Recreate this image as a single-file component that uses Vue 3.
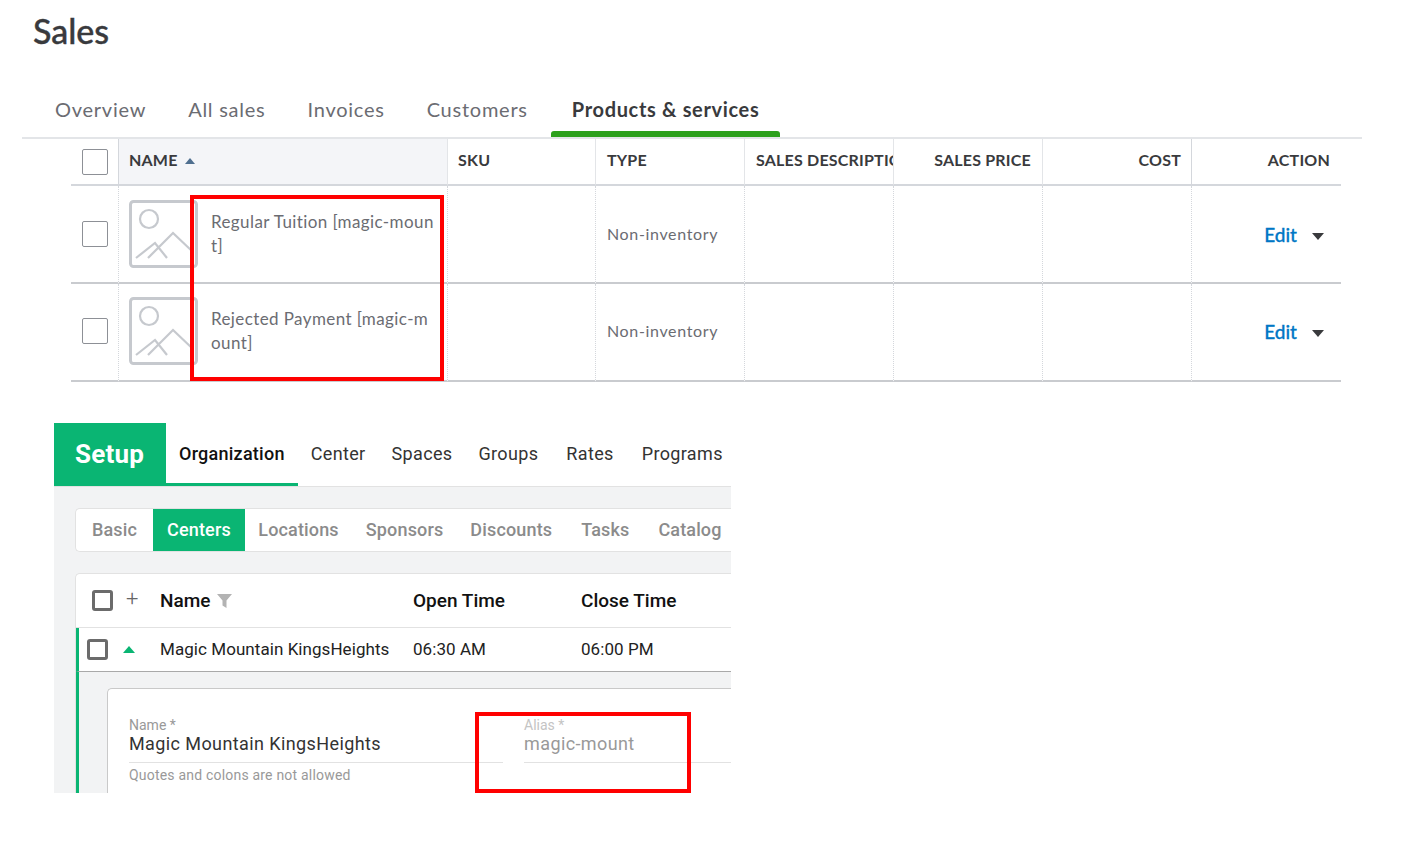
<template>
  <div class="page">
    <h1 class="title">Sales</h1>
    <nav class="tabs">
      <a v-for="tab in tabs" :key="tab" class="tab" :class="{ active: tab === 'Products & services' }">{{ tab }}</a>
    </nav>

    <div class="table-wrap">
      <table class="products">
        <colgroup>
          <col v-for="(w, i) in colWidths" :key="i" :style="{ width: w + 'px' }" />
        </colgroup>
        <thead>
          <tr>
            <th class="check-col"><span class="qb-check"></span></th>
            <th class="name-head">NAME <span class="sort-up"></span></th>
            <th>SKU</th>
            <th>TYPE</th>
            <th>SALES DESCRIPTION</th>
            <th class="right">SALES PRICE</th>
            <th class="right cost-head">COST</th>
            <th class="right">ACTION</th>
          </tr>
        </thead>
        <tbody>
          <tr v-for="item in products" :key="item.name">
            <td class="check-col"><span class="qb-check"></span></td>
            <td>
              <div class="name-cell">
                <svg class="thumb" viewBox="0 0 69 68" fill="none" stroke="#c6c9ce" stroke-width="2.2">
                  <rect x="1.5" y="1.5" width="66" height="65" rx="3" stroke-width="3" />
                  <circle cx="20" cy="19" r="9" />
                  <path d="M7 58 26 43 38 58M19 58 44 33 64 52" />
                </svg>
                <span class="item-name">{{ item.name }}</span>
              </div>
            </td>
            <td></td>
            <td class="type">Non-inventory</td>
            <td></td>
            <td></td>
            <td></td>
            <td class="action">
              <a class="edit">Edit</a><span class="caret-down"></span>
            </td>
          </tr>
        </tbody>
      </table>
      <div class="callout first"></div>
    </div>

    <section class="setup">
      <header class="setup-nav">
        <div class="setup-title">Setup</div>
        <a v-for="item in setupNav" :key="item" class="setup-link" :class="{ active: item === 'Organization' }">{{ item }}</a>
      </header>
      <div class="setup-body">
        <div class="subtabs">
          <a v-for="item in subTabs" :key="item" class="subtab" :class="{ active: item === 'Centers' }">{{ item }}</a>
        </div>
        <div class="centers">
          <div class="row head-row">
            <span class="box"></span>
            <span class="plus">+</span>
            <span class="cell-name">Name
              <svg class="funnel" viewBox="0 0 15 15"><path d="M0 1h15L9.500 7.500V15L5.500 12.500V7.500z" fill="#b3b3b3" /></svg>
            </span>
            <span class="cell-open">Open Time</span>
            <span>Close Time</span>
          </div>
          <div class="row data-row">
            <span class="box"></span>
            <span class="caret-up"></span>
            <span class="cell-name">Magic Mountain KingsHeights</span>
            <span class="cell-open">06:30 AM</span>
            <span>06:00 PM</span>
          </div>
          <div class="detail">
            <div class="detail-card">
              <div class="field name-field">
                <label>Name *</label>
                <div class="value">Magic Mountain KingsHeights</div>
                <small>Quotes and colons are not allowed</small>
              </div>
              <div class="field alias-field">
                <label>Alias *</label>
                <div class="value">magic-mount</div>
              </div>
            </div>
          </div>
        </div>
      </div>
      <div class="callout second"></div>
    </section>
  </div>
</template>

<script setup>
const tabs = ['Overview', 'All sales', 'Invoices', 'Customers', 'Products & services']
const colWidths = [48, 329, 148, 149, 149, 149, 149, 149]
const products = [
  { name: 'Regular Tuition [magic-mount]' },
  { name: 'Rejected Payment [magic-mount]' }
]
const setupNav = ['Organization', 'Center', 'Spaces', 'Groups', 'Rates', 'Programs']
const subTabs = ['Basic', 'Centers', 'Locations', 'Sponsors', 'Discounts', 'Tasks', 'Catalog']
</script>

<style>
html,
body {
  margin: 0;
  background: #fff;
}
</style>

<style scoped>
.page {
  position: relative;
  width: 1405px;
  height: 845px;
  overflow: hidden;
  font-family: Lato, "Open Sans", sans-serif;
  color: #393a3d;
}

.title {
  margin: 0 0 0 33px;
  height: 88px;
  padding-top: 11px;
  box-sizing: border-box;
  font-size: 34px;
  line-height: 40px;
  font-weight: 500;
  -webkit-text-stroke: 0.4px #393a3d;
}

.tabs {
  display: flex;
  width: 1328px;
  margin-left: 22px;
  padding-left: 12px;
  border-bottom: 2px solid #e3e5e8;
}

.tab {
  position: relative;
  box-sizing: border-box;
  height: 49px;
  padding: 0 21px;
  font-size: 20px;
  line-height: 42px;
  letter-spacing: 0.75px;
  color: #6b6c72;
  white-space: nowrap;
}

.tab.active {
  margin-left: 2px;
  font-weight: 700;
  letter-spacing: 0.66px;
  color: #393a3d;
}

.tab.active::after {
  content: "";
  position: absolute;
  left: 0;
  right: 0;
  bottom: 0;
  height: 6px;
  border-radius: 3px 3px 0 0;
  background: #2ca01c;
}

.table-wrap {
  position: relative;
  margin-left: 71px;
  width: 1270px;
}

.products {
  width: 1270px;
  table-layout: fixed;
  border-collapse: separate;
  border-spacing: 0;
}

.products th {
  box-sizing: border-box;
  height: 47px;
  padding: 0 0 4px 11px;
  border-bottom: 2px solid #d4d7dc;
  border-right: 1px solid #e3e5e8;
  font-size: 16px;
  letter-spacing: 0.2px;
  font-weight: 700;
  text-align: left;
  white-space: nowrap;
  overflow: hidden;
}

.products th:last-child {
  border-right: 0;
}

.products th:nth-child(2),
.products th:nth-child(3) {
  padding-left: 10px;
}

.products th.right {
  padding: 0 11px 4px 0;
  text-align: right;
}

.products th.cost-head {
  padding-right: 10px;
  border-right-color: #d4d7dc;
}

.products th.check-col {
  padding: 0 0 0 11px;
  border-right-color: #d4d7dc;
}

.products .name-head {
  background: #f4f5f8;
}

.sort-up {
  display: inline-block;
  margin-left: 3px;
  vertical-align: 2px;
  border: 5px solid transparent;
  border-top: 0;
  border-bottom: 6px solid #4f6f8f;
}

.products td {
  box-sizing: border-box;
  height: 98px;
  padding: 0;
  border-bottom: 2px solid #c9cbcf;
  border-right: 1px dotted #d4d7dc;
  vertical-align: middle;
}

.products td:last-child {
  border-right: 0;
}

.products td.check-col {
  padding-left: 11px;
}

.products tbody tr:last-child td {
  padding-bottom: 2px;
}

.qb-check {
  display: block;
  box-sizing: border-box;
  width: 26px;
  height: 26px;
  border: 1px solid #8d9096;
  border-radius: 2px;
  background: #fff;
}

.name-cell {
  display: flex;
  align-items: flex-start;
  padding-left: 10px;
  height: 68px;
}

.thumb {
  flex: none;
  width: 69px;
  height: 68px;
}

.item-name {
  width: 225px;
  margin: 10px 0 0 13px;
  font-size: 17px;
  line-height: 24px;
  letter-spacing: 0.4px;
  color: #6b6c72;
  word-break: break-all;
}

.products td.type {
  padding: 0 0 2px 11px;
  font-size: 16px;
  letter-spacing: 0.65px;
  color: #6b6c72;
}

.products tbody tr:last-child td.type {
  padding-bottom: 4px;
}

.products td.action {
  padding: 0 17px 0 0;
  text-align: right;
  white-space: nowrap;
}

.edit {
  font-size: 19px;
  font-weight: 500;
  color: #0077c5;
  -webkit-text-stroke: 0.3px #0077c5;
}

.caret-down {
  display: inline-block;
  margin-left: 15px;
  vertical-align: 2px;
  border: 6px solid transparent;
  border-bottom: 0;
  border-top: 7px solid #393a3d;
}

.callout {
  position: absolute;
  box-sizing: border-box;
  border: 4px solid #ff0000;
  pointer-events: none;
}

.callout.first {
  left: 119px;
  top: 56px;
  width: 254px;
  height: 186px;
}

.setup {
  position: relative;
  margin: 41px 0 0 54px;
  width: 677px;
  height: 370px;
  overflow: hidden;
  font-family: Roboto, sans-serif;
}

.setup-nav {
  display: flex;
  height: 64px;
  border-bottom: 1px solid #e2e2e2;
  box-sizing: border-box;
}

.setup-title {
  flex: none;
  width: 112px;
  height: 63px;
  background: #0ab573;
  padding-left: 21px;
  box-sizing: border-box;
  color: #fff;
  font-size: 26px;
  letter-spacing: 0.2px;
  font-weight: 700;
  line-height: 62px;
}

.setup-link {
  box-sizing: border-box;
  height: 63px;
  padding: 0 13px;
  font-size: 18px;
  line-height: 62px;
  color: #333;
  letter-spacing: 0.35px;
  white-space: nowrap;
}

.setup-link:nth-last-child(-n + 2) {
  margin-left: 2px;
}

.setup-link.active {
  font-weight: 500;
  letter-spacing: 0.25px;
  color: #111;
  border-bottom: 3px solid #0ab573;
}

.setup-body {
  height: 306px;
  padding: 21px 0 0 21px;
  box-sizing: border-box;
  background: #f2f3f4;
}

.subtabs {
  display: flex;
  box-sizing: border-box;
  height: 44px;
  margin-right: -1px;
  border: 1px solid #e2e2e2;
  border-right: 0;
  border-radius: 5px 0 0 5px;
  background: #fff;
  overflow: hidden;
}

.subtab {
  padding: 0 13.5px;
  font-size: 18px;
  letter-spacing: 0.15px;
  font-weight: 500;
  line-height: 41px;
  color: #8b8b8b;
  white-space: nowrap;
}

.subtab:first-child {
  padding-left: 16px;
  padding-right: 16px;
}

.subtab:nth-last-child(-n + 2) {
  margin-left: 2px;
}

.subtab.active {
  padding: 0 14px;
  background: #0ab573;
  color: #fff;
}

.centers {
  margin-top: 21px;
  border-top: 1px solid #e2e2e2;
  border-left: 1px solid #e2e2e2;
  border-radius: 5px 0 0 0;
  background: #fff;
  overflow: hidden;
}

.row {
  display: flex;
  align-items: center;
  box-sizing: border-box;
  white-space: nowrap;
}

.head-row {
  height: 54px;
  padding-left: 16px;
  border-bottom: 1px solid #e2e2e2;
  font-size: 19px;
  font-weight: 500;
  color: #111;
}

.data-row {
  height: 44px;
  padding: 0 0 1px 8px;
  border-left: 3px solid #0ab573;
  border-bottom: 1px solid #a9a9a9;
  font-size: 17px;
  letter-spacing: 0.06px;
  color: #222;
}

.box {
  flex: none;
  box-sizing: border-box;
  width: 21px;
  height: 21px;
  border: 3px solid #6b6b6b;
  border-radius: 3px;
}

.plus {
  width: 47px;
  padding-left: 13px;
  box-sizing: border-box;
  font-size: 22px;
  font-weight: 300;
  line-height: 20px;
  color: #666;
  margin-top: -4px;
}

.caret-up {
  flex: none;
  width: 0;
  margin: 0 25px 0 15px;
  border: 6.500px solid transparent;
  border-top: 0;
  border-bottom: 7px solid #0ab573;
}

.cell-name {
  display: flex;
  align-items: center;
  gap: 7px;
  width: 253px;
}

.funnel {
  width: 15px;
  height: 15px;
}

.cell-open {
  width: 168px;
}

.detail {
  height: 140px;
  padding: 16px 0 0 28px;
  box-sizing: border-box;
  border-left: 3px solid #0ab573;
  background: #f2f3f4;
}

.detail-card {
  display: flex;
  height: 130px;
  padding: 28px 0 0 21px;
  box-sizing: border-box;
  border: 1px solid #c9c9c9;
  border-right: 0;
  border-radius: 5px 0 0 0;
  background: #fff;
}

.field label {
  display: block;
  font-size: 14px;
  line-height: 16px;
  color: #999;
}

.field .value {
  height: 30px;
  padding-top: 1px;
  box-sizing: border-box;
  border-bottom: 1px solid #e2e2e2;
  font-size: 18px;
  line-height: 20px;
  letter-spacing: 0.4px;
  color: #333;
}

.field small {
  display: block;
  margin-top: 4px;
  font-size: 14px;
  line-height: 16px;
  letter-spacing: 0.2px;
  color: #999;
}

.name-field {
  flex: none;
  width: 374px;
}

.alias-field {
  flex: none;
  width: 260px;
  margin-left: 21px;
}

.alias-field label {
  color: #c4c4c4;
}

.alias-field .value {
  color: #999;
}

.callout.second {
  left: 421px;
  top: 289px;
  width: 216px;
  height: 81px;
}
</style>
